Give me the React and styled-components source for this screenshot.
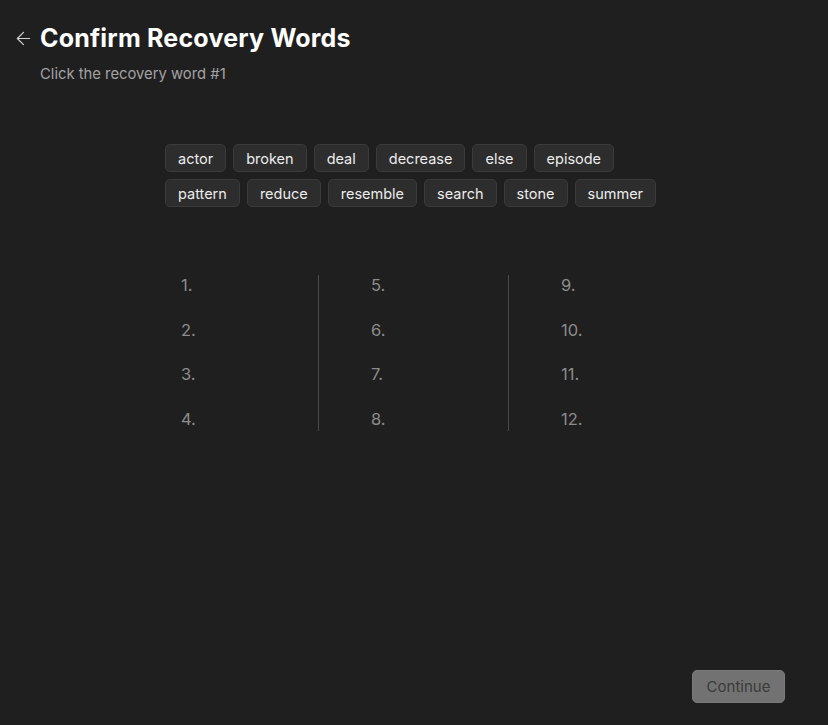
import React from 'react';
import styled, { createGlobalStyle } from 'styled-components';
import { ArrowLeft } from 'lucide-react';

const words = [
  ['actor', 'broken', 'deal', 'decrease', 'else', 'episode'],
  ['pattern', 'reduce', 'resemble', 'search', 'stone', 'summer'],
];

const columns = [
  [1, 2, 3, 4],
  [5, 6, 7, 8],
  [9, 10, 11, 12],
];

const App = () => {
  return (
    <>
      <GlobalStyle />
      <Page>
        <Header>
          <BackButton aria-label="Back">
            <ArrowLeft size={21} strokeWidth={1.4} />
          </BackButton>
          <Title>Confirm Recovery Words</Title>
        </Header>
        <Subtitle>Click the recovery word #1</Subtitle>

        <WordBank>
          {words.map((row, i) => (
            <ChipRow key={i}>
              {row.map((w) => (
                <Chip key={w}>{w}</Chip>
              ))}
            </ChipRow>
          ))}
        </WordBank>

        <SlotGrid>
          {columns.map((col, i) => (
            <SlotColumn key={i} $divider={i > 0}>
              {col.map((n) => (
                <Slot key={n}>{n}.</Slot>
              ))}
            </SlotColumn>
          ))}
        </SlotGrid>

        <Footer>
          <ContinueButton disabled>Continue</ContinueButton>
        </Footer>
      </Page>
    </>
  );
};

export default App;

const GlobalStyle = createGlobalStyle`
  html, body {
    margin: 0;
    background: #1f1f1f;
  }
  body {
    font-family: Inter, "Noto Sans", "Liberation Sans", sans-serif;
    -webkit-font-smoothing: antialiased;
  }
`;

const Page = styled.div`
  height: 725px;
  display: flex;
  flex-direction: column;
  background: #1f1f1f;
  box-sizing: border-box;
  padding: 23px 0 22px;
`;

const Header = styled.div`
  display: flex;
  align-items: center;
  gap: 6px;
  padding-left: 13px;
  height: 30px;
`;

const BackButton = styled.button`
  display: flex;
  align-items: center;
  background: none;
  border: none;
  padding: 0;
  color: #cfcfcf;
  cursor: pointer;
`;

const Title = styled.h1`
  margin: 0;
  font-size: 25px;
  font-weight: 700;
  color: #ffffff;
  letter-spacing: 0.2px;
`;

const Subtitle = styled.p`
  margin: 12px 0 0 40px;
  font-size: 14.8px;
  color: #a3a3a3;
`;

const WordBank = styled.div`
  margin: 61px auto 0;
  width: 498px;
  display: flex;
  flex-direction: column;
  gap: 7px;
`;

const ChipRow = styled.div`
  display: flex;
  gap: 7px;
`;

const Chip = styled.button`
  height: 28px;
  padding: 0 12px;
  border-radius: 5px;
  border: 1px solid #3a3a3a;
  background: #2d2d2d;
  color: #ececec;
  font-family: inherit;
  font-size: 14.5px;
  cursor: pointer;
`;

const SlotGrid = styled.div`
  margin: 68px auto 0;
  width: 570px;
  display: grid;
  grid-template-columns: repeat(3, 1fr);
  transform: translateX(-1px);
`;

const SlotColumn = styled.div`
  display: flex;
  flex-direction: column;
  gap: 24.7px;
  padding: 0 0 2px 52px;
  border-left: 1px solid ${(p) => (p.$divider ? '#4a4a4a' : 'transparent')};
`;

const Slot = styled.div`
  line-height: 20px;
  font-size: 16.5px;
  color: #8c8c8c;
`;

const Footer = styled.div`
  margin-top: auto;
  display: flex;
  justify-content: flex-end;
  padding-right: 43px;
`;

const ContinueButton = styled.button`
  width: 93px;
  height: 33px;
  border-radius: 5px;
  border: 1px solid #7a7a7a;
  background: #727272;
  color: #3a3a3a;
  font-family: inherit;
  font-size: 15px;
`;
